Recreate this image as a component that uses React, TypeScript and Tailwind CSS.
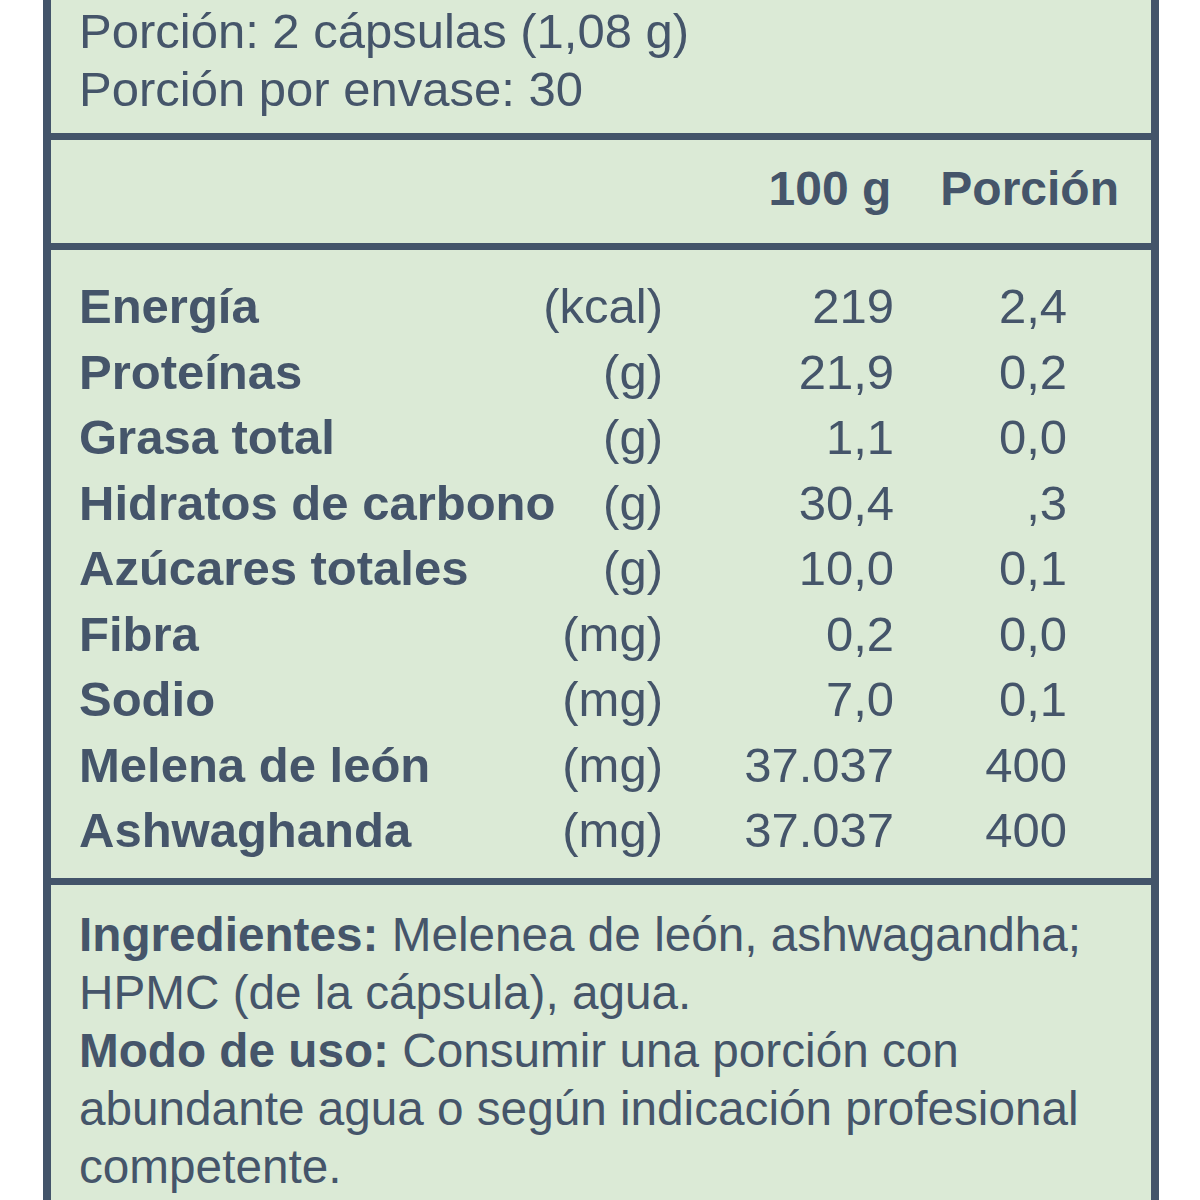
const ROWS = [
  { name: 'Energía', unit: '(kcal)', per100: '219', portion: '2,4' },
  { name: 'Proteínas', unit: '(g)', per100: '21,9', portion: '0,2' },
  { name: 'Grasa total', unit: '(g)', per100: '1,1', portion: '0,0' },
  { name: 'Hidratos de carbono', unit: '(g)', per100: '30,4', portion: ',3' },
  { name: 'Azúcares totales', unit: '(g)', per100: '10,0', portion: '0,1' },
  { name: 'Fibra', unit: '(mg)', per100: '0,2', portion: '0,0' },
  { name: 'Sodio', unit: '(mg)', per100: '7,0', portion: '0,1' },
  { name: 'Melena de león', unit: '(mg)', per100: '37.037', portion: '400' },
  { name: 'Ashwaghanda', unit: '(mg)', per100: '37.037', portion: '400' },
];

export default function App() {
  return (
    <div className="w-[1200px] h-[1200px] overflow-hidden bg-white font-['Liberation_Sans',Arial,sans-serif] text-[49px] text-[#45556a]">
      <div className="ml-[43px] w-[1116px] min-h-[1200px] border-x-[8px] border-[#43546a] bg-[#dbead6]">
        {/* serving */}
        <div className="border-b-[7px] border-[#43546a] pl-[28px] pt-[2px] pb-[15px] leading-[58px]">
          <div>Porción: 2 cápsulas (1,08 g)</div>
          <div>Porción por envase: 30</div>
        </div>

        {/* column headers */}
        <div className="flex justify-end gap-[49px] border-b-[7px] border-[#43546a] pt-[20px] pb-[25px] pr-[32px] text-[48px] font-bold leading-[58px]">
          <span>100 g</span>
          <span>Porción</span>
        </div>

        {/* nutrients */}
        <div className="border-b-[7px] border-[#43546a] pl-[28px] pr-[84px] pt-[24px] pb-[14px]">
          {ROWS.map((r) => (
            <div key={r.name} className="grid grid-cols-[minmax(0,1fr)_auto_231px_173px] leading-[65.5px] whitespace-nowrap">
              <span className="font-bold">{r.name}</span>
              <span className="text-right">{r.unit}</span>
              <span className="text-right">{r.per100}</span>
              <span className="text-right">{r.portion}</span>
            </div>
          ))}
        </div>

        {/* ingredients */}
        <div className="pl-[28px] pt-[21px] text-[47.7px] leading-[58px] whitespace-nowrap">
          <div>
            <span className="font-bold">Ingredientes:</span> Melenea de león, ashwagandha;
            <br />
            HPMC (de la cápsula), agua.
          </div>
          <div>
            <span className="font-bold">Modo de uso:</span> Consumir una porción con
            <br />
            abundante agua o según indicación profesional
            <br />
            competente.
          </div>
        </div>
      </div>
    </div>
  );
}
